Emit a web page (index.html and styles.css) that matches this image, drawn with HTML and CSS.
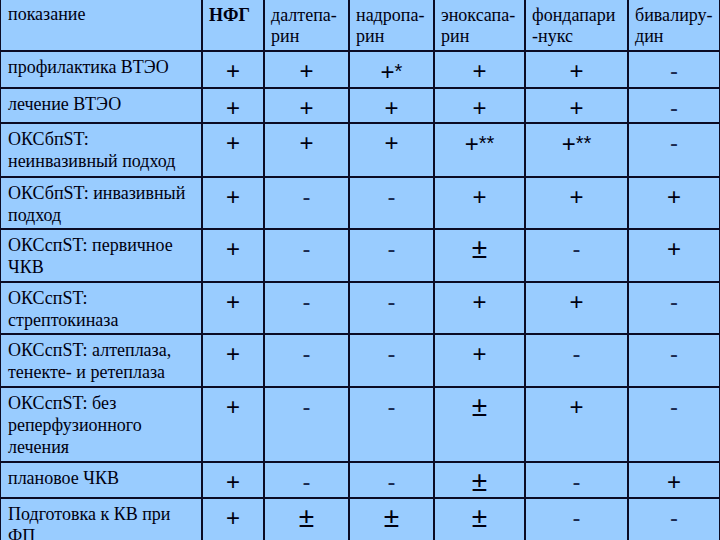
FILE: index.html
```html
<!DOCTYPE html>
<html lang="ru">
<head>
<meta charset="utf-8">
<title>Показания</title>
<link rel="stylesheet" href="styles.css">
</head>
<body>
<table class="grid">
  <colgroup>
    <col class="c-ind"><col class="c-nfg"><col class="c-dal"><col class="c-nad"><col class="c-eno"><col class="c-fon"><col class="c-biv">
  </colgroup>
  <tr class="r-head">
    <th class="lbl">показание</th>
    <th class="hd bold">НФГ</th>
    <th class="hd">далтепа-<br>рин</th>
    <th class="hd">надропа-<br>рин</th>
    <th class="hd">эноксапа-<br>рин</th>
    <th class="hd">фондапари<br>-нукс</th>
    <th class="hd">бивалиру-<br>дин</th>
  </tr>
  <tr class="r1">
    <td class="lbl">профилактика ВТЭО</td>
    <td class="m">+</td><td class="m">+</td><td class="m">+<span class="st">*</span></td><td class="m">+</td><td class="m">+</td><td class="m d">-</td>
  </tr>
  <tr class="r2">
    <td class="lbl">лечение ВТЭО</td>
    <td class="m">+</td><td class="m">+</td><td class="m">+</td><td class="m">+</td><td class="m">+</td><td class="m d">-</td>
  </tr>
  <tr class="r3">
    <td class="lbl">ОКСбпST:<br>неинвазивный подход</td>
    <td class="m">+</td><td class="m">+</td><td class="m">+</td><td class="m">+<span class="st">**</span></td><td class="m">+<span class="st">**</span></td><td class="m d">-</td>
  </tr>
  <tr class="r4">
    <td class="lbl">ОКСбпST: инвазивный подход</td>
    <td class="m">+</td><td class="m d">-</td><td class="m d">-</td><td class="m">+</td><td class="m">+</td><td class="m">+</td>
  </tr>
  <tr class="r5">
    <td class="lbl">ОКСспST: первичное ЧКВ</td>
    <td class="m">+</td><td class="m d">-</td><td class="m d">-</td><td class="m pm">±</td><td class="m d">-</td><td class="m">+</td>
  </tr>
  <tr class="r6">
    <td class="lbl">ОКСспST:<br>стрептокиназа</td>
    <td class="m">+</td><td class="m d">-</td><td class="m d">-</td><td class="m">+</td><td class="m">+</td><td class="m d">-</td>
  </tr>
  <tr class="r7">
    <td class="lbl">ОКСспST: алтеплаза, тенекте- и ретеплаза</td>
    <td class="m">+</td><td class="m d">-</td><td class="m d">-</td><td class="m">+</td><td class="m d">-</td><td class="m d">-</td>
  </tr>
  <tr class="r8">
    <td class="lbl">ОКСспST: без реперфузионного лечения</td>
    <td class="m">+</td><td class="m d">-</td><td class="m d">-</td><td class="m pm">±</td><td class="m">+</td><td class="m d">-</td>
  </tr>
  <tr class="r9">
    <td class="lbl">плановое ЧКВ</td>
    <td class="m">+</td><td class="m d">-</td><td class="m d">-</td><td class="m pm">±</td><td class="m d">-</td><td class="m">+</td>
  </tr>
  <tr class="r10">
    <td class="lbl">Подготовка к КВ при ФП</td>
    <td class="m">+</td><td class="m pm">±</td><td class="m pm">±</td><td class="m pm">±</td><td class="m d">-</td><td class="m d">-</td>
  </tr>
</table>
</body>
</html>
```
FILE: styles.css
```css
html, body {
  margin: 0;
  padding: 0;
  background: #99ccff;
  overflow: hidden;
}
body {
  width: 720px;
  height: 540px;
  font-family: "Liberation Serif", "DejaVu Serif", serif;
  color: #000010;
}
.grid {
  border-collapse: collapse;
  table-layout: fixed;
  width: 720px;
  margin: -2px 0 0 -1px;
}
.c-ind { width: 202px; }
.c-nfg { width: 62px; }
.c-dal { width: 85px; }
.c-nad { width: 85px; }
.c-eno { width: 91px; }
.c-fon { width: 103px; }
.c-biv { width: 92px; }

.grid th, .grid td {
  border: 2px solid #0b0b24;
  vertical-align: top;
  padding: 0;
  font-weight: normal;
}
.grid .lbl {
  font-family: "Liberation Serif", "DejaVu Serif", serif;
  text-align: left;
  font-size: 18px;
  line-height: 22px;
  padding: 4px 4px 0 7px;
}
.grid .hd {
  font-family: "Liberation Serif", "DejaVu Serif", serif;
  text-align: left;
  font-size: 18px;
  line-height: 21px;
  padding: 5px 2px 0 6px;
}
.grid .r-head .lbl { padding-top: 4px; line-height: 21px; }
.grid .bold { font-weight: bold; }

.grid .m {
  text-align: center;
  font-family: "Liberation Sans", Arial, sans-serif;
  font-size: 24px;
  line-height: 26px;
  padding-top: 6px;
}
.grid .m.d { color: #1a2a50; }
.grid .m.pm { font-size: 28px; line-height: 26px; }
.st {
  font-size: 20px;
  vertical-align: 2px;
}

.r-head { height: 52px; }
.r1 { height: 37px; }
.r2 { height: 35px; }
.r3 { height: 54px; }
.r4 { height: 52px; }
.r5 { height: 53px; }
.r6 { height: 52px; }
.r7 { height: 53px; }
.r8 { height: 75px; }
.r9 { height: 36px; }
.r10 { height: 60px; }
```
